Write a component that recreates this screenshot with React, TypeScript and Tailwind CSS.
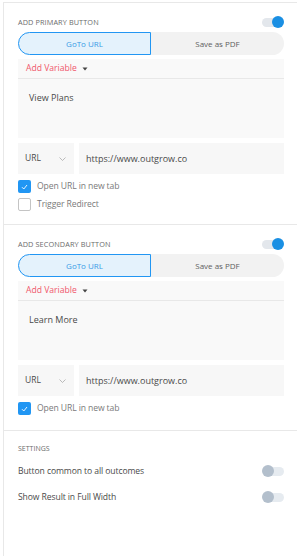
import React from "react";

const font = { fontFamily: '"Open Sans", "Noto Sans", sans-serif' };

function Toggle({ on }: { on: boolean }) {
  if (on) {
    return (
      <div className="relative w-[22px] h-[12px] flex items-center">
        <div className="w-[20px] h-[9px] rounded-full bg-[#e3e7ec]" />
        <div className="absolute right-0 top-0 w-[12px] h-[12px] rounded-full bg-[#1a8fe3]" />
      </div>
    );
  }
  return (
    <div className="relative w-[22px] h-[12px] flex items-center">
      <div className="ml-[2px] w-[20px] h-[9px] rounded-full bg-[#e6ebf0]" />
      <div className="absolute left-0 top-0 w-[12px] h-[12px] rounded-full bg-[#b3bfcc]" />
    </div>
  );
}

function Checkbox({ checked, label }: { checked: boolean; label: string }) {
  return (
    <div className="flex items-center h-[13px] gap-[6px]">
      {checked ? (
        <div className="w-[13px] h-[13px] rounded-[2px] bg-[#2196f3] flex items-center justify-center">
          <svg width="7" height="6" viewBox="0 0 7 6">
            <path d="M1 3.2 L2.8 5 L6 1" stroke="white" strokeWidth="0.9" fill="none" />
          </svg>
        </div>
      ) : (
        <div className="w-[13px] h-[13px] rounded-[2px] border border-[#c4c4c4] bg-white" />
      )}
      <span className="text-[8.6px] tracking-[-0.1px] text-[#7a7a7a]">{label}</span>
    </div>
  );
}

function ButtonSection({
  title,
  text,
  redirect,
}: {
  title: string;
  text: string;
  redirect: boolean;
}) {
  return (
    <div className="flex flex-col">
      <div className="flex items-center justify-between h-[12px]">
        <span className="text-[7.3px] text-[#6b6b6b] tracking-[0.1px]">{title}</span>
        <Toggle on />
      </div>
      <div className="mt-[4px] flex h-[23px]">
        <div className="w-[133px] rounded-l-full border border-[#2196f3] bg-[#e4f2fc] flex items-center justify-center text-[8px] text-[#3a9ae6]">
          GoTo URL
        </div>
        <div className="flex-1 rounded-r-full bg-[#f2f2f2] flex items-center justify-center text-[8px] text-[#5f5f5f]">
          Save as PDF
        </div>
      </div>
      <div className="mt-[4px] h-[79px] bg-[#f9f9f9] flex flex-col">
        <div className="h-[20px] border-b border-[#e8e8e8] flex items-center pl-[8px]">
          <span className="text-[8.6px] text-[#f0566a]">Add Variable</span>
          <svg className="ml-[5px]" width="6" height="4" viewBox="0 0 6 4">
            <path d="M0.5 0.5 L5.5 0.5 L3 3.5 Z" fill="#444" />
          </svg>
        </div>
        <div className="pl-[11px] pt-[12px] text-[9px] text-[#4a4a4a]">{text}</div>
      </div>
      <div className="mt-[5px] flex h-[31px] gap-[5px]">
        <div className="w-[56px] bg-[#f7f7f7] flex items-center justify-between pl-[7px] pr-[8px]">
          <span className="text-[8.5px] text-[#4a4a4a]">URL</span>
          <svg width="7" height="4" viewBox="0 0 7 4">
            <path d="M0.5 0.5 L3.5 3.5 L6.5 0.5" stroke="#aaa" strokeWidth="0.8" fill="none" />
          </svg>
        </div>
        <div className="flex-1 bg-[#f7f7f7] flex items-center pl-[7px] text-[9px] text-[#4a4a4a]">
          https://www.outgrow.co
        </div>
      </div>
      <div className="mt-[6px] flex flex-col gap-[5px]">
        <Checkbox checked label="Open URL in new tab" />
        {redirect && <Checkbox checked={false} label="Trigger Redirect" />}
      </div>
    </div>
  );
}

export default function App() {
  return (
    <div className="w-[297px] h-[556px] bg-white pl-[3px] pt-[2px]" style={font}>
      <div className="h-[554px] border-l border-t border-[#e8e8e8] flex flex-col">
        <div className="pl-[14px] pr-[13px] pt-[13px] h-[221px]">
          <ButtonSection title="ADD PRIMARY BUTTON" text="View Plans" redirect />
        </div>
        <div className="border-t border-[#e8e8e8] pl-[14px] pr-[13px] pt-[13px] h-[206px]">
          <ButtonSection title="ADD SECONDARY BUTTON" text="Learn More" redirect={false} />
        </div>
        <div className="border-t border-[#e8e8e8] pl-[14px] pr-[13px] pt-[12px] flex flex-col">
          <div className="h-[12px] flex items-center text-[7px] text-[#6b6b6b]">SETTINGS</div>
          <div className="mt-[10px] h-[12px] flex items-center justify-between">
            <span className="text-[8.6px] tracking-[-0.1px] text-[#4a4a4a]">Button common to all outcomes</span>
            <Toggle on={false} />
          </div>
          <div className="mt-[14px] h-[12px] flex items-center justify-between">
            <span className="text-[8.6px] tracking-[-0.1px] text-[#4a4a4a]">Show Result in Full Width</span>
            <Toggle on={false} />
          </div>
        </div>
      </div>
    </div>
  );
}
